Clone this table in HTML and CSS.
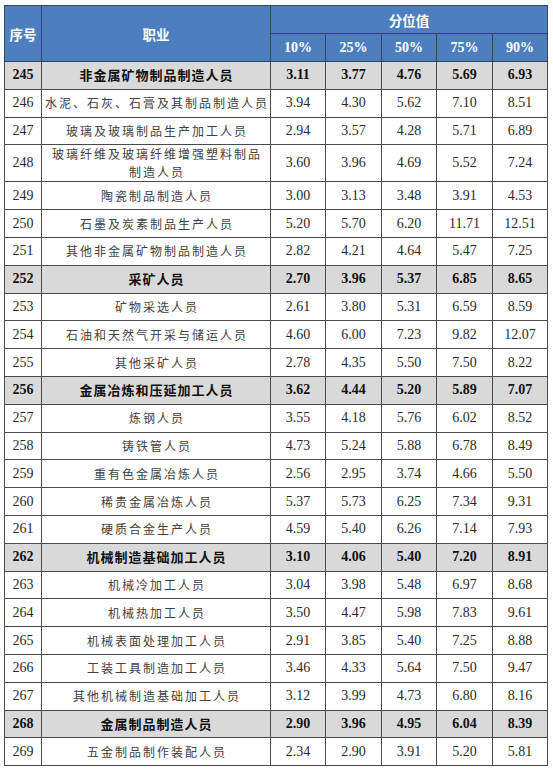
FILE: index.html
```html
<!DOCTYPE html>
<html lang="zh">
<head>
<meta charset="utf-8">
<link rel="stylesheet" href="styles.css">
</head>
<body>
<div class="wrap">
<table class="tbl">
<colgroup>
<col class="c-no"><col class="c-job"><col class="c-n"><col class="c-n2"><col class="c-n"><col class="c-n2"><col class="c-n">
</colgroup>
<thead>
<tr class="h1"><th rowspan="2" class="hz">序号</th><th rowspan="2" class="hz">职业</th><th colspan="5" class="hz">分位值</th></tr>
<tr class="h2"><th>10%</th><th>25%</th><th>50%</th><th class="dk">75%</th><th>90%</th></tr>
</thead>
<tbody>
<tr class="cat"><td>245</td><td class="zh">非金属矿物制品制造人员</td><td>3.11</td><td>3.77</td><td>4.76</td><td class="dk">5.69</td><td>6.93</td></tr>
<tr><td>246</td><td class="zh">水泥、石灰、石膏及其制品制造人员</td><td>3.94</td><td>4.30</td><td>5.62</td><td class="dk">7.10</td><td>8.51</td></tr>
<tr><td>247</td><td class="zh">玻璃及玻璃制品生产加工人员</td><td>2.94</td><td>3.57</td><td>4.28</td><td class="dk">5.71</td><td>6.89</td></tr>
<tr class="tall"><td>248</td><td class="zh">玻璃纤维及玻璃纤维增强塑料制品<br>制造人员</td><td>3.60</td><td>3.96</td><td>4.69</td><td class="dk">5.52</td><td>7.24</td></tr>
<tr><td>249</td><td class="zh">陶瓷制品制造人员</td><td>3.00</td><td>3.13</td><td>3.48</td><td class="dk">3.91</td><td>4.53</td></tr>
<tr><td>250</td><td class="zh">石墨及炭素制品生产人员</td><td>5.20</td><td>5.70</td><td>6.20</td><td class="dk">11.71</td><td>12.51</td></tr>
<tr><td>251</td><td class="zh">其他非金属矿物制品制造人员</td><td>2.82</td><td>4.21</td><td>4.64</td><td class="dk">5.47</td><td>7.25</td></tr>
<tr class="cat"><td>252</td><td class="zh">采矿人员</td><td>2.70</td><td>3.96</td><td>5.37</td><td class="dk">6.85</td><td>8.65</td></tr>
<tr><td>253</td><td class="zh">矿物采选人员</td><td>2.61</td><td>3.80</td><td>5.31</td><td class="dk">6.59</td><td>8.59</td></tr>
<tr><td>254</td><td class="zh">石油和天然气开采与储运人员</td><td>4.60</td><td>6.00</td><td>7.23</td><td class="dk">9.82</td><td>12.07</td></tr>
<tr><td>255</td><td class="zh">其他采矿人员</td><td>2.78</td><td>4.35</td><td>5.50</td><td class="dk">7.50</td><td>8.22</td></tr>
<tr class="cat"><td>256</td><td class="zh">金属冶炼和压延加工人员</td><td>3.62</td><td>4.44</td><td>5.20</td><td class="dk">5.89</td><td>7.07</td></tr>
<tr><td>257</td><td class="zh">炼钢人员</td><td>3.55</td><td>4.18</td><td>5.76</td><td class="dk">6.02</td><td>8.52</td></tr>
<tr><td>258</td><td class="zh">铸铁管人员</td><td>4.73</td><td>5.24</td><td>5.88</td><td class="dk">6.78</td><td>8.49</td></tr>
<tr><td>259</td><td class="zh">重有色金属冶炼人员</td><td>2.56</td><td>2.95</td><td>3.74</td><td class="dk">4.66</td><td>5.50</td></tr>
<tr><td>260</td><td class="zh">稀贵金属冶炼人员</td><td>5.37</td><td>5.73</td><td>6.25</td><td class="dk">7.34</td><td>9.31</td></tr>
<tr><td>261</td><td class="zh">硬质合金生产人员</td><td>4.59</td><td>5.40</td><td>6.26</td><td class="dk">7.14</td><td>7.93</td></tr>
<tr class="cat"><td>262</td><td class="zh">机械制造基础加工人员</td><td>3.10</td><td>4.06</td><td>5.40</td><td class="dk">7.20</td><td>8.91</td></tr>
<tr><td>263</td><td class="zh">机械冷加工人员</td><td>3.04</td><td>3.98</td><td>5.48</td><td class="dk">6.97</td><td>8.68</td></tr>
<tr><td>264</td><td class="zh">机械热加工人员</td><td>3.50</td><td>4.47</td><td>5.98</td><td class="dk">7.83</td><td>9.61</td></tr>
<tr><td>265</td><td class="zh">机械表面处理加工人员</td><td>2.91</td><td>3.85</td><td>5.40</td><td class="dk">7.25</td><td>8.88</td></tr>
<tr><td>266</td><td class="zh">工装工具制造加工人员</td><td>3.46</td><td>4.33</td><td>5.64</td><td class="dk">7.50</td><td>9.47</td></tr>
<tr><td>267</td><td class="zh">其他机械制造基础加工人员</td><td>3.12</td><td>3.99</td><td>4.73</td><td class="dk">6.80</td><td>8.16</td></tr>
<tr class="cat"><td>268</td><td class="zh">金属制品制造人员</td><td>2.90</td><td>3.96</td><td>4.95</td><td class="dk">6.04</td><td>8.39</td></tr>
<tr><td>269</td><td class="zh">五金制品制作装配人员</td><td>2.34</td><td>2.90</td><td>3.91</td><td class="dk">5.20</td><td>5.81</td></tr>
</tbody>
</table>
</div>
</body>
</html>
```

FILE: styles.css
```css
html, body {
  margin: 0;
  padding: 0;
  background: #ffffff;
}
.wrap {
  padding: 5px 6px 0 4px;
}
.tbl {
  border-collapse: collapse;
  table-layout: fixed;
  width: 543px;
  font-family: "Liberation Serif", "Times New Roman", serif;
  font-size: 14px;
  color: #2a2a2a;
}
.c-no { width: 37px; }
.c-job { width: 229px; }
.c-n { width: 55px; }
.c-n2 { width: 56px; }
.tbl th, .tbl td {
  border: 1px solid #4a4a4a;
  text-align: center;
  vertical-align: middle;
  padding: 0;
  overflow: hidden;
}
.tbl th {
  background: #4d7fbf;
  color: #ffffff;
  font-weight: bold;
  border-color: #34465e;
}
.tbl .hz {
  font-family: "Noto Sans CJK SC", sans-serif;
  font-size: 13.5px;
  font-weight: bold;
}
.h1 { height: 28px; }
.h2 { height: 28px; }
.h2 th { font-size: 14px; }
.tbl tbody tr { height: 27.8px; }
.tbl tbody tr.tall { height: 37px; }
.tbl td.zh {
  font-family: "Noto Sans CJK SC", sans-serif;
  font-size: 12px;
  letter-spacing: 2px;
  line-height: 16px;
  color: #404040;
  padding-left: 2px;
}
.tbl tr.tall td.zh {
  line-height: 18px;
}
.cat td {
  background: #d9d9d9;
  font-weight: bold;
  color: #111;
}
.cat td.zh {
  font-size: 13px;
  letter-spacing: 1px;
  font-weight: bold;
  color: #111;
  padding-left: 1px;
}
.tbl td.dk, .tbl th.dk {
  border-left-color: #111;
}
```
